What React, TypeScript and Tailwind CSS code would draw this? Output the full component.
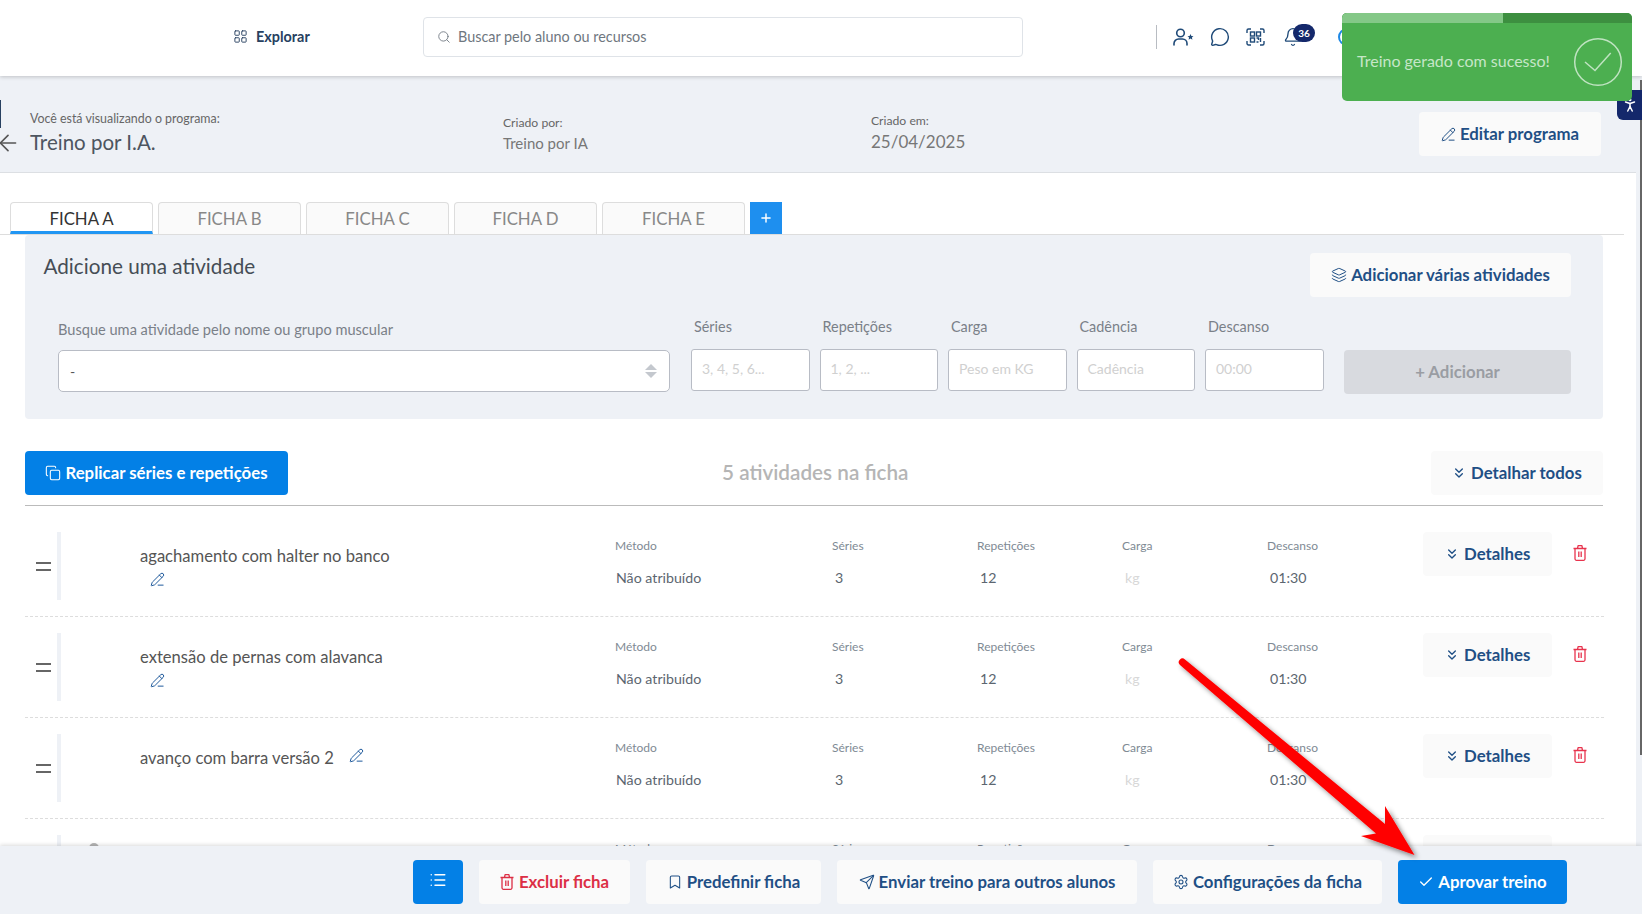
import React from "react";
import {
  LayoutGrid, Search, MessageCircle, Bell, ArrowLeft, PencilLine, Layers, Copy, ChevronsDown,
  List, Bookmark, Send, Settings, Check, Plus, PersonStanding,
} from "lucide-react";

const tabs = ["FICHA A", "FICHA B", "FICHA C", "FICHA D", "FICHA E"];
const fields = [
  { label: "Séries", ph: "3, 4, 5, 6..." },
  { label: "Repetições", ph: "1, 2, ..." },
  { label: "Carga", ph: "Peso em KG" },
  { label: "Cadência", ph: "Cadência" },
  { label: "Descanso", ph: "00:00" },
];
const rows = [
  { name: "agachamento com halter no banco", inline: false },
  { name: "extensão de pernas com alavanca", inline: false },
  { name: "avanço com barra versão 2", inline: true },
];

function QrIcon() {
  return (
    <svg width="19" height="18" viewBox="0 0 19 18" fill="none" stroke="#1f4a78" strokeWidth="1.4">
      <path d="M1 5V2.500A1.500 1.500 0 0 1 2.500 1H5M14 1h2.500A1.500 1.500 0 0 1 18 2.500V5M18 13v2.500A1.500 1.500 0 0 1 16.500 17H14M5 17H2.500A1.500 1.500 0 0 1 1 15.500V13" />
      <rect x="4.500" y="4" width="4" height="4" />
      <rect x="10.500" y="4" width="4" height="4" />
      <rect x="4.500" y="10" width="4" height="4" />
      <path d="M10.500 10h2v2M14.500 10v4M10.500 14h2" />
    </svg>
  );
}

function UserStarIcon() {
  return (
    <svg width="21" height="18" viewBox="0 0 21 18" fill="none" stroke="#1f4a78" strokeWidth="1.6" strokeLinecap="round">
      <circle cx="7.500" cy="5" r="3.800" />
      <path d="M1 17v-1.500A4.500 4.500 0 0 1 5.500 11h4a4.500 4.500 0 0 1 4.500 4.500V17" />
      <path fill="#1f4a78" stroke="none" d="M17.500 6l.9 2 2.100.2-1.600 1.400.5 2.100-1.900-1.100-1.900 1.100.5-2.100-1.600-1.400 2.100-.2z" />
    </svg>
  );
}

function TrashIcon({ className }: { className: string }) {
  return (
    <svg className={className} width="14" height="16" viewBox="0 0 14 16" fill="none" stroke="currentColor" strokeWidth="1.3" strokeLinejoin="round">
      <path d="M.5 3.500h13M4.500 3.500l.6-2.800h3.800l.6 2.800" />
      <path d="M2 3.500v10.300A1.500 1.500 0 0 0 3.500 15.300h7a1.500 1.500 0 0 0 1.500-1.500V3.500" />
      <path d="M5.800 6.500v5.500M8.200 6.500v5.500" />
    </svg>
  );
}

function DetailButton({ text, className }: { text: string; className: string }) {
  return (
    <button className={`flex items-center rounded bg-[#fafafa] text-[16.8px] font-bold text-[#1f4f85] ${className}`}>
      <ChevronsDown size={16} strokeWidth={2} className="mr-[4px]" />
      {text}
    </button>
  );
}

function Col({ left, label, value, muted, valueClass }: { left: string; label: string; value: string; muted?: boolean; valueClass?: string }) {
  return (
    <div className={`absolute top-[22px] ${left}`}>
      <div className="text-[12px] leading-[16px] text-[#808a94]">{label}</div>
      <div className={`mt-[14px] text-[14.2px] leading-[20px] ${valueClass ?? "ml-[3px]"} ${muted ? "text-[#d8d8d8]" : "text-[#5c6670]"}`}>{value}</div>
    </div>
  );
}

function Row({ name, inline }: { name: string; inline: boolean }) {
  return (
    <div className="relative h-[101px] border-b border-dashed border-[#dddddd]">
      <div className="absolute left-[11px] top-[46px] flex flex-col gap-[5px]">
        <div className="h-[2px] w-[15px] bg-[#666]" />
        <div className="h-[2px] w-[15px] bg-[#666]" />
      </div>
      <div className="absolute left-[32px] top-[16px] h-[68px] w-[4px] bg-[#eef1f6]" />
      <div className="absolute left-[115px] top-[28px] text-[16.6px] leading-[24px] text-[#555]">
        {name}
        {inline && <PencilLine size={15} strokeWidth={1.6} className="ml-[15px] inline align-[1px] text-[#1f5a9c]" />}
      </div>
      {!inline && <PencilLine size={15} strokeWidth={1.6} className="absolute left-[125px] top-[56px] text-[#1f5a9c]" />}

      <Col left="left-[590px]" label="Método" value="Não atribuído" valueClass="ml-px" />
      <Col left="left-[807px]" label="Séries" value="3" />
      <Col left="left-[952px]" label="Repetições" value="12" />
      <Col left="left-[1097px]" label="Carga" value="kg" muted />
      <Col left="left-[1242px]" label="Descanso" value="01:30" />

      <DetailButton text="Detalhes" className="absolute left-[1398px] top-[16px] h-[44px] w-[129px] pl-[21px]" />
      <TrashIcon className="absolute left-[1548px] top-[29px] text-[#e8344e]" />
    </div>
  );
}

export default function App() {
  return (
    <div className="relative h-[914px] w-[1642px] overflow-hidden bg-white [font-family:Lato,sans-serif]">
      {/* top bar */}
      <header className="relative z-10 flex h-[76px] items-center bg-white pb-[2px] shadow-[0_1px_4px_rgba(0,0,0,0.2)]">
        <div className="ml-[233px] flex w-[78px] items-center gap-[8px] pb-[1px] text-[14.4px] font-bold text-[#274060]">
          <LayoutGrid size={15} strokeWidth={1.5} />
          Explorar
        </div>
        <div className="ml-[112px] flex h-[40px] w-[600px] items-center rounded border border-[#dfe3e8] pb-[1px] pl-[13px] text-[14.4px] text-[#6f7780]">
          <Search size={14} className="mr-[7px]" strokeWidth={1.5} />
          Buscar pelo aluno ou recursos
        </div>
        <div className="ml-[133px] h-[24px] w-px bg-[#b8bcc2]" />
        <div className="ml-[16px]"><UserStarIcon /></div>
        <MessageCircle size={20} strokeWidth={1.7} className="ml-[16px] text-[#1f4a78]" />
        <div className="ml-[16px]"><QrIcon /></div>
        <div className="relative ml-[18px]">
          <Bell size={20} strokeWidth={1.6} className="text-[#1f4a78]" />
          <span className="absolute left-[10px] top-[-3px] flex h-[18px] w-[22px] items-center justify-center rounded-full bg-[#14286b] text-[10px] font-bold text-white">36</span>
        </div>
        <div className="ml-[35px] h-[18px] w-[18px] rounded-full border-2 border-[#1e88e5]" />
      </header>

      {/* program info */}
      <section className="relative flex h-[97px] border-b border-[#dcdfe3] bg-[#eef1f6]">
        <div className="absolute left-0 top-[24px] h-[28px] w-px bg-[#274060]" />
        <ArrowLeft size={26} strokeWidth={1.5} className="absolute left-[-5px] top-[54px] text-[#555]" />
        <div className="absolute left-[30px] top-[35px] text-[12.4px] leading-[16px] text-[#666]">Você está visualizando o programa:</div>
        <div className="absolute left-[30px] top-[52px] text-[20.5px] leading-[28px] text-[#4d5560]">Treino por I.A.</div>
        <div className="absolute left-[503px] top-[39px] text-[12.2px] leading-[16px] text-[#666]">Criado por:</div>
        <div className="absolute left-[503px] top-[57px] text-[15px] leading-[20px] text-[#777]">Treino por IA</div>
        <div className="absolute left-[871px] top-[37px] text-[12.2px] leading-[16px] text-[#666]">Criado em:</div>
        <div className="absolute left-[871px] top-[54px] text-[17px] leading-[24px] text-[#777]">25/04/2025</div>
        <button className="absolute left-[1419px] top-[36px] flex h-[44px] w-[182px] items-center justify-center rounded bg-[#fafafa] text-[16.8px] font-bold text-[#1f4f85]">
          <PencilLine size={15} strokeWidth={1.6} className="mr-[4px]" />
          Editar programa
        </button>
      </section>

      {/* tabs */}
      <div className="mr-[18px] flex h-[62px] items-end gap-[5px] border-b border-[#dddddd] pl-[10px]">
        {tabs.map((t, i) => (
          <div
            key={t}
            className={`flex h-[32px] w-[143px] items-center justify-center rounded-t border border-b-0 border-[#dddddd] text-[16.8px] ${
              i === 0 ? "border-b-[3px] border-b-[#2196f3] bg-white pt-[4px] text-[#333]" : "bg-[#fafafa] text-[#888]"
            }`}
          >
            {t}
          </div>
        ))}
        <div className="flex h-[32px] w-[32px] items-center justify-center bg-[#1e8fef] text-white">
          <Plus size={14} strokeWidth={2.5} />
        </div>
      </div>

      {/* add activity */}
      <section className="relative ml-[25px] h-[184px] w-[1578px] rounded bg-[#eef1f6]">
        <div className="absolute left-[18.5px] top-[16px] text-[20.7px] leading-[30px] text-[#454d55]">Adicione uma atividade</div>
        <button className="absolute left-[1285px] top-[18px] flex h-[44px] w-[261px] items-center justify-center rounded bg-[#fafafa] text-[16.8px] font-bold text-[#1f4f85]">
          <Layers size={16} strokeWidth={1.5} className="mr-[4px]" />
          Adicionar várias atividades
        </button>
        <div className="absolute left-[33px] top-[85px] text-[14.6px] leading-[20px] text-[#7a8088]">Busque uma atividade pelo nome ou grupo muscular</div>
        <div className="absolute left-[33px] top-[115px] flex h-[42px] w-[612px] items-center justify-between rounded-[5px] border border-[#b8bcc5] bg-white pl-[11px] pr-[12px] text-[14px] text-[#555]">
          -
          <div className="flex flex-col gap-[2px]">
            <div className="h-0 w-0 border-x-[6px] border-b-[6px] border-x-transparent border-b-[#c4c8ce]" />
            <div className="h-0 w-0 border-x-[6px] border-t-[6px] border-x-transparent border-t-[#c4c8ce]" />
          </div>
        </div>
        <div className="absolute left-[666px] top-[82px] flex gap-[10px]">
          {fields.map((f) => (
            <div key={f.label} className="w-[118.5px]">
              <div className="ml-[3px] text-[14.4px] leading-[20px] text-[#7a8088]">{f.label}</div>
              <div className="mt-[12px] flex h-[42px] items-center rounded-[3px] border border-[#b8bcc5] bg-white pb-[3px] pl-[10px] text-[14px] text-[#d0d0d0]">{f.ph}</div>
            </div>
          ))}
        </div>
        <button className="absolute left-[1319px] top-[115px] flex h-[44px] w-[227px] items-center justify-center rounded bg-[#d8dadf] text-[16.8px] font-bold text-[#9a9da3]">
          + Adicionar
        </button>
      </section>

      {/* list head */}
      <div className="relative ml-[25px] mt-[32px] h-[55px] w-[1578px] border-b border-[#bbbbbb]">
        <button className="flex h-[44px] w-[263px] items-center justify-center rounded bg-[#0380e6] text-[16.8px] font-bold text-white">
          <Copy size={16} strokeWidth={1.6} className="mr-[4px]" />
          Replicar séries e repetições
        </button>
        <div className="absolute left-[697px] top-[6px] text-[20.7px] font-semibold leading-[30px] text-[#b5b5b5]">5 atividades na ficha</div>
        <DetailButton text="Detalhar todos" className="absolute left-[1406px] top-0 h-[44px] w-[172px] pl-[20px]" />
      </div>

      {/* rows */}
      <div className="ml-[25px] mt-[10px] w-[1579px]">
        {rows.map((r) => (
          <Row key={r.name} name={r.name} inline={r.inline} />
        ))}
        {/* fourth row runs on under the footer */}
        <div className="relative h-[40px]">
          <div className="absolute left-[32px] top-[16px] h-[24px] w-[4px] bg-[#eef1f6]" />
          <div className="absolute left-[64px] top-[24px] h-[10px] w-[10px] rounded-full bg-[#b5b5b5]" />
          <div className="absolute left-[1398px] top-[16px] h-[24px] w-[129px] rounded-t bg-[#fafafa]" />
          <Col left="left-[590px]" label="Método" value="" valueClass="ml-px" />
          <Col left="left-[807px]" label="Séries" value="" />
          <Col left="left-[952px]" label="Repetições" value="" />
          <Col left="left-[1097px]" label="Carga" value="" muted />
          <Col left="left-[1242px]" label="Descanso" value="" />
        </div>
      </div>

      {/* scrollbar */}
      <div className="absolute right-0 top-[76px] h-[770px] w-[6px] bg-[#eef1f6] pt-[4px]">
        <div className="ml-[4px] h-[675px] w-[2px] bg-[#666]" />
      </div>

      {/* footer */}
      <footer className="absolute bottom-0 left-0 flex h-[68px] w-full items-center gap-[16px] bg-[#eef1f6] pl-[413px] pt-[4px] shadow-[0_-1px_4px_rgba(0,0,0,0.15)]">
        <button className="flex h-[44px] w-[50px] items-center justify-center rounded bg-[#0380e6] pb-[4px] text-white"><List size={18} /></button>
        <button className="flex h-[44px] w-[151px] items-center justify-center rounded bg-[#fafafa] text-[16.8px] font-bold text-[#dc2f45]"><TrashIcon className="mr-[5px]" />Excluir ficha</button>
        <button className="flex h-[44px] w-[175px] items-center justify-center rounded bg-[#fafafa] text-[16.8px] font-bold text-[#1f4f85]"><Bookmark size={16} strokeWidth={1.6} className="mr-[4px]" />Predefinir ficha</button>
        <button className="flex h-[44px] w-[300px] items-center justify-center rounded bg-[#fafafa] text-[16.8px] font-bold text-[#1f4f85]"><Send size={16} strokeWidth={1.6} className="mr-[4px]" />Enviar treino para outros alunos</button>
        <button className="flex h-[44px] w-[229px] items-center justify-center rounded bg-[#fafafa] text-[16.8px] font-bold text-[#1f4f85]"><Settings size={16} strokeWidth={1.6} className="mr-[4px]" />Configurações da ficha</button>
        <button className="flex h-[44px] w-[169px] items-center justify-center rounded bg-[#0380e6] text-[16.8px] font-bold text-white"><Check size={16} strokeWidth={2} className="mr-[4px]" />Aprovar treino</button>
      </footer>

      {/* accessibility tab */}
      <div className="absolute right-0 top-[90px] z-10 flex h-[30px] w-[25px] items-end justify-center rounded-bl-md bg-[#14286b] pb-[6px] text-white">
        <PersonStanding size={18} strokeWidth={2} />
      </div>

      {/* toast */}
      <div className="absolute left-[1342px] top-[13px] z-20 h-[88px] w-[290px] overflow-hidden rounded-[5px] bg-[#4caf50]">
        <div className="flex h-[10px] bg-[#3d8f40]"><div className="w-[161px] bg-[#84c887]" /></div>
        <div className="absolute left-[15px] top-[37px] text-[16px] leading-[22px] text-[#c6e6c8]">Treino gerado com sucesso!</div>
        <svg className="absolute left-[231px] top-[24px]" width="50" height="50" viewBox="0 0 50 50" fill="none" stroke="#bfe3c1" strokeWidth="1.500">
          <circle cx="25" cy="25" r="23.300" />
          <path d="M12 25l10 8.500 15.700-17.500" />
        </svg>
      </div>

      {/* annotation arrow */}
      <svg className="absolute left-0 top-0 z-30" width="1642" height="914" fill="none">
        <defs>
          <filter id="sh" x="-10%" y="-10%" width="120%" height="120%">
            <feDropShadow dx="3" dy="3" stdDeviation="2.500" floodColor="#000" floodOpacity="0.45" />
          </filter>
        </defs>
        <path filter="url(#sh)" fill="#ff0000" d="M1180 665a3.500 3.500 0 0 1 5-5.500L1385 824L1385 806L1414.500 855L1361 836L1376 833.500Z" />
      </svg>
    </div>
  );
}
